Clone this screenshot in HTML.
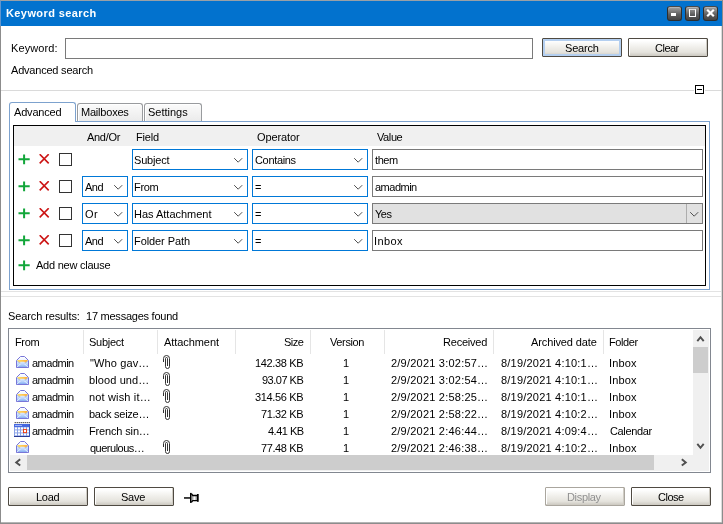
<!DOCTYPE html><html><head><meta charset="utf-8"><title>Keyword search</title><style>
*{box-sizing:border-box;margin:0;padding:0}
html,body{width:723px;height:524px;overflow:hidden;background:#fff}
body{position:relative;font:11px "Liberation Sans",sans-serif;color:#000}
#win{position:absolute;left:0;top:0;width:723px;height:524px;will-change:transform}
.a{position:absolute;white-space:nowrap}
.t{position:absolute;white-space:nowrap;line-height:13px;height:13px}
.btn{position:absolute;height:19px;border:1px solid #4f4a42;border-radius:1px;background:linear-gradient(#ffffff 0%,#ffffff 10%,#f1f0ec 45%,#e5e3dd 78%,#cbc8c0 100%);box-shadow:inset -1px -1px 0 #cfccc4,inset 1px 1px 0 #fff}
.sel{position:absolute;height:21px;border:1px solid #0078d7;background:#fff}
.inp{position:absolute;height:21px;border:1px solid #7a7a7a;background:#fff}
.chev{position:absolute;width:11px;height:7px}
.cb{position:absolute;width:13px;height:13px;border:1px solid #333;background:#fff}
.tab{position:absolute;border:1px solid #999b9e;border-bottom:none;border-radius:3px 3px 0 0;background:linear-gradient(#fbfbfb,#ebebeb);box-shadow:inset 1px 1px 0 #fff}
</style></head><body><div id="win">
<div class="a" style="left:0;top:0;width:723px;height:524px;border-left:1px solid #8c8c8c;border-right:1px solid #8c8c8c;border-bottom:1px solid #8c8c8c"></div>
<div class="a" style="left:721px;top:26px;width:1px;height:497px;background:#dcdcdc"></div>
<div class="a" style="left:1px;top:522px;width:721px;height:1px;background:#b4b4b4"></div>
<div class="a" style="left:0;top:0;width:722px;height:26px;background:#0272ce;border-top:1px solid #9aa0a6;border-left:1px solid #5f95cf"></div>
<div class="t" style="left:6px;top:7px;letter-spacing:0.40px;color:#fff;font-weight:bold">Keyword search</div>
<div class="a" style="left:667px;top:6px;width:15px;height:15px;border-radius:3px;background:linear-gradient(#a2a2a2 0%,#808080 30%,#5c5c5c 60%,#444 100%);border:1px solid #2e2e2e;border-top-color:#4a4a4a;box-shadow:inset 0 1px 0 #b4b4b4"></div>
<div class="a" style="left:685px;top:6px;width:15px;height:15px;border-radius:3px;background:linear-gradient(#a2a2a2 0%,#808080 30%,#5c5c5c 60%,#444 100%);border:1px solid #2e2e2e;border-top-color:#4a4a4a;box-shadow:inset 0 1px 0 #b4b4b4"></div>
<div class="a" style="left:703px;top:6px;width:15px;height:15px;border-radius:3px;background:linear-gradient(#a2a2a2 0%,#808080 30%,#5c5c5c 60%,#444 100%);border:1px solid #2e2e2e;border-top-color:#4a4a4a;box-shadow:inset 0 1px 0 #b4b4b4"></div>
<div class="a" style="left:671px;top:13px;width:5px;height:3px;background:#fff"></div>
<div class="a" style="left:689px;top:9px;width:7px;height:8px;border:1px solid #fff;border-top-color:#ddd"></div>
<svg class="a" style="left:706px;top:9px" width="9" height="8" viewBox="0 0 9 8"><path d="M1.2 0.8L7.8 7.2M7.8 0.8L1.2 7.2" stroke="#fff" stroke-width="2.2" fill="none"/></svg>
<div class="t" style="left:11px;top:42px;letter-spacing:0.09px;">Keyword:</div>
<div class="a" style="left:65px;top:38px;width:468px;height:21px;border:1px solid #7a7a7a;background:#fff"></div>
<div class="btn" style="left:542px;top:38px;width:80px;box-shadow:inset 0 0 0 2px #b4cff0"></div>
<div class="t" style="left:565px;top:42px;letter-spacing:-0.20px;">Search</div>
<div class="btn" style="left:628px;top:38px;width:80px;"></div>
<div class="t" style="left:655px;top:42px;letter-spacing:-0.50px;">Clear</div>
<div class="t" style="left:11px;top:64px;letter-spacing:-0.21px;">Advanced search</div>
<div class="a" style="left:1px;top:90px;width:720px;height:1px;background:#dadada"></div>
<div class="a" style="left:695px;top:85px;width:9px;height:9px;border:1px solid #000;background:#fff;box-shadow:0 0 0 1px #fff"></div>
<div class="a" style="left:697px;top:89px;width:5px;height:1px;background:#000"></div>
<div class="a" style="left:9px;top:121px;width:701px;height:169px;border:1px solid #7da2ce;background:#fff"></div>
<div class="tab" style="left:77px;top:103px;width:66px;height:18px"></div>
<div class="tab" style="left:144px;top:103px;width:58px;height:18px"></div>
<div class="tab" style="left:9px;top:102px;width:67px;height:20px;background:#fff;border-color:#7da2ce;box-shadow:none"></div>
<div class="t" style="left:14px;top:106px;letter-spacing:-0.19px;">Advanced</div>
<div class="t" style="left:81px;top:106px;letter-spacing:-0.21px;">Mailboxes</div>
<div class="t" style="left:148px;top:106px;letter-spacing:-0.01px;">Settings</div>
<div class="a" style="left:13px;top:125px;width:693px;height:161px;border:1px solid #000;background:#fff"></div>
<div class="a" style="left:14px;top:126px;width:691px;height:20px;background:#f0f0f0"></div>
<div class="t" style="left:87px;top:131px;letter-spacing:-0.30px;">And/Or</div>
<div class="t" style="left:136px;top:131px;letter-spacing:-0.20px;">Field</div>
<div class="t" style="left:257px;top:131px;letter-spacing:-0.10px;">Operator</div>
<div class="t" style="left:377px;top:131px;letter-spacing:-0.40px;">Value</div>
<svg class="a" style="left:18px;top:154px" width="12" height="11" viewBox="0 0 12 11"><path d="M6.1 0.4V10.2M0.5 5.3H11.7" stroke="#12a63a" stroke-width="2" fill="none"/></svg>
<svg class="a" style="left:39px;top:154px" width="11" height="10" viewBox="0 0 11 10"><path d="M0.7 0.2L9.7 9.4M9.7 0.2L0.7 9.4" stroke="#cc1414" stroke-width="1.6" fill="none"/></svg>
<div class="cb" style="left:59px;top:153px"></div>
<div class="sel" style="left:132px;top:149px;width:116px"></div>
<svg class="chev" style="left:234px;top:158px;margin:-1px 0 0 -1px" viewBox="0 0 11 7"><path d="M1.2 1.2 L5.2 5.2 L9.2 1.2" fill="none" stroke="#505050" stroke-width="1"/></svg>
<div class="t" style="left:134px;top:154px;letter-spacing:-0.20px;">Subject</div>
<div class="sel" style="left:252px;top:149px;width:116px"></div>
<svg class="chev" style="left:354px;top:158px;margin:-1px 0 0 -1px" viewBox="0 0 11 7"><path d="M1.2 1.2 L5.2 5.2 L9.2 1.2" fill="none" stroke="#505050" stroke-width="1"/></svg>
<div class="t" style="left:255px;top:154px;letter-spacing:-0.34px;">Contains</div>
<div class="inp" style="left:372px;top:149px;width:331px"></div>
<div class="t" style="left:375px;top:154px;letter-spacing:-0.43px;">them</div>
<svg class="a" style="left:18px;top:181px" width="12" height="11" viewBox="0 0 12 11"><path d="M6.1 0.4V10.2M0.5 5.3H11.7" stroke="#12a63a" stroke-width="2" fill="none"/></svg>
<svg class="a" style="left:39px;top:181px" width="11" height="10" viewBox="0 0 11 10"><path d="M0.7 0.2L9.7 9.4M9.7 0.2L0.7 9.4" stroke="#cc1414" stroke-width="1.6" fill="none"/></svg>
<div class="cb" style="left:59px;top:180px"></div>
<div class="sel" style="left:82px;top:176px;width:46px"></div>
<svg class="chev" style="left:114px;top:185px;margin:-1px 0 0 -1px" viewBox="0 0 11 7"><path d="M1.2 1.2 L5.2 5.2 L9.2 1.2" fill="none" stroke="#505050" stroke-width="1"/></svg>
<div class="t" style="left:85px;top:181px;letter-spacing:-0.50px;">And</div>
<div class="sel" style="left:132px;top:176px;width:116px"></div>
<svg class="chev" style="left:234px;top:185px;margin:-1px 0 0 -1px" viewBox="0 0 11 7"><path d="M1.2 1.2 L5.2 5.2 L9.2 1.2" fill="none" stroke="#505050" stroke-width="1"/></svg>
<div class="t" style="left:134px;top:181px;letter-spacing:-0.30px;">From</div>
<div class="sel" style="left:252px;top:176px;width:116px"></div>
<svg class="chev" style="left:354px;top:185px;margin:-1px 0 0 -1px" viewBox="0 0 11 7"><path d="M1.2 1.2 L5.2 5.2 L9.2 1.2" fill="none" stroke="#505050" stroke-width="1"/></svg>
<div class="t" style="left:255px;top:181px;letter-spacing:0.40px;">=</div>
<div class="inp" style="left:372px;top:176px;width:331px"></div>
<div class="t" style="left:375px;top:181px;letter-spacing:-0.50px;">amadmin</div>
<svg class="a" style="left:18px;top:208px" width="12" height="11" viewBox="0 0 12 11"><path d="M6.1 0.4V10.2M0.5 5.3H11.7" stroke="#12a63a" stroke-width="2" fill="none"/></svg>
<svg class="a" style="left:39px;top:208px" width="11" height="10" viewBox="0 0 11 10"><path d="M0.7 0.2L9.7 9.4M9.7 0.2L0.7 9.4" stroke="#cc1414" stroke-width="1.6" fill="none"/></svg>
<div class="cb" style="left:59px;top:207px"></div>
<div class="sel" style="left:82px;top:203px;width:46px"></div>
<svg class="chev" style="left:114px;top:212px;margin:-1px 0 0 -1px" viewBox="0 0 11 7"><path d="M1.2 1.2 L5.2 5.2 L9.2 1.2" fill="none" stroke="#505050" stroke-width="1"/></svg>
<div class="t" style="left:85px;top:208px;letter-spacing:0.40px;">Or</div>
<div class="sel" style="left:132px;top:203px;width:116px"></div>
<svg class="chev" style="left:234px;top:212px;margin:-1px 0 0 -1px" viewBox="0 0 11 7"><path d="M1.2 1.2 L5.2 5.2 L9.2 1.2" fill="none" stroke="#505050" stroke-width="1"/></svg>
<div class="t" style="left:134px;top:208px;letter-spacing:-0.01px;">Has Attachment</div>
<div class="sel" style="left:252px;top:203px;width:116px"></div>
<svg class="chev" style="left:354px;top:212px;margin:-1px 0 0 -1px" viewBox="0 0 11 7"><path d="M1.2 1.2 L5.2 5.2 L9.2 1.2" fill="none" stroke="#505050" stroke-width="1"/></svg>
<div class="t" style="left:255px;top:208px;letter-spacing:0.40px;">=</div>
<div class="inp" style="left:372px;top:203px;width:331px;background:#e1e1e1"></div>
<div class="a" style="left:686px;top:204px;width:1px;height:19px;background:#adadad"></div>
<svg class="chev" style="left:690px;top:212px;margin:-1px 0 0 -1px" viewBox="0 0 11 7"><path d="M1.2 1.2 L5.2 5.2 L9.2 1.2" fill="none" stroke="#505050" stroke-width="1"/></svg>
<div class="t" style="left:375px;top:208px;letter-spacing:-0.50px;">Yes</div>
<svg class="a" style="left:18px;top:235px" width="12" height="11" viewBox="0 0 12 11"><path d="M6.1 0.4V10.2M0.5 5.3H11.7" stroke="#12a63a" stroke-width="2" fill="none"/></svg>
<svg class="a" style="left:39px;top:235px" width="11" height="10" viewBox="0 0 11 10"><path d="M0.7 0.2L9.7 9.4M9.7 0.2L0.7 9.4" stroke="#cc1414" stroke-width="1.6" fill="none"/></svg>
<div class="cb" style="left:59px;top:234px"></div>
<div class="sel" style="left:82px;top:230px;width:46px"></div>
<svg class="chev" style="left:114px;top:239px;margin:-1px 0 0 -1px" viewBox="0 0 11 7"><path d="M1.2 1.2 L5.2 5.2 L9.2 1.2" fill="none" stroke="#505050" stroke-width="1"/></svg>
<div class="t" style="left:85px;top:235px;letter-spacing:-0.50px;">And</div>
<div class="sel" style="left:132px;top:230px;width:116px"></div>
<svg class="chev" style="left:234px;top:239px;margin:-1px 0 0 -1px" viewBox="0 0 11 7"><path d="M1.2 1.2 L5.2 5.2 L9.2 1.2" fill="none" stroke="#505050" stroke-width="1"/></svg>
<div class="t" style="left:134px;top:235px;letter-spacing:-0.08px;">Folder Path</div>
<div class="sel" style="left:252px;top:230px;width:116px"></div>
<svg class="chev" style="left:354px;top:239px;margin:-1px 0 0 -1px" viewBox="0 0 11 7"><path d="M1.2 1.2 L5.2 5.2 L9.2 1.2" fill="none" stroke="#505050" stroke-width="1"/></svg>
<div class="t" style="left:255px;top:235px;letter-spacing:0.40px;">=</div>
<div class="inp" style="left:372px;top:230px;width:331px"></div>
<div class="t" style="left:374px;top:235px;letter-spacing:0.40px;">Inbox</div>
<svg class="a" style="left:18px;top:260px" width="12" height="11" viewBox="0 0 12 11"><path d="M6.1 0.4V10.2M0.5 5.3H11.7" stroke="#12a63a" stroke-width="2" fill="none"/></svg>
<div class="t" style="left:36px;top:259px;letter-spacing:-0.24px;">Add new clause</div>
<div class="a" style="left:1px;top:291px;width:720px;height:1px;background:#e3e3e3"></div>
<div class="a" style="left:1px;top:296px;width:720px;height:1px;background:#e3e3e3"></div>
<div class="t" style="left:8px;top:310px;letter-spacing:-0.11px;">Search results:</div>
<div class="t" style="left:86px;top:310px;letter-spacing:-0.24px;">17 messages found</div>
<div class="a" style="left:8px;top:328px;width:703px;height:145px;border:1px solid #828790;background:#fff"></div>
<div class="a" style="left:83px;top:330px;width:1px;height:24px;background:#e5e5e5"></div>
<div class="a" style="left:157px;top:330px;width:1px;height:24px;background:#e5e5e5"></div>
<div class="a" style="left:235px;top:330px;width:1px;height:24px;background:#e5e5e5"></div>
<div class="a" style="left:310px;top:330px;width:1px;height:24px;background:#e5e5e5"></div>
<div class="a" style="left:384px;top:330px;width:1px;height:24px;background:#e5e5e5"></div>
<div class="a" style="left:493px;top:330px;width:1px;height:24px;background:#e5e5e5"></div>
<div class="a" style="left:603px;top:330px;width:1px;height:24px;background:#e5e5e5"></div>
<div class="t" style="left:15px;top:336px;letter-spacing:-0.37px;">From</div>
<div class="t" style="left:89px;top:336px;letter-spacing:-0.27px;">Subject</div>
<div class="t" style="left:164px;top:336px;letter-spacing:-0.07px;">Attachment</div>
<div class="t" style="left:284px;top:336px;letter-spacing:-0.50px;">Size</div>
<div class="t" style="left:330px;top:336px;letter-spacing:-0.37px;">Version</div>
<div class="t" style="left:443px;top:336px;letter-spacing:-0.21px;">Received</div>
<div class="t" style="left:531px;top:336px;letter-spacing:-0.12px;">Archived date</div>
<div class="t" style="left:609px;top:336px;letter-spacing:-0.42px;">Folder</div>
<svg class="a" style="left:16px;top:356px" width="13" height="12" viewBox="0 0 13 12"><defs><linearGradient id="mg" x1="0" y1="0" x2="0" y2="1"><stop offset="0" stop-color="#ffffff"/><stop offset="0.4" stop-color="#eaf2ff"/><stop offset="0.75" stop-color="#b4d0fa"/><stop offset="1" stop-color="#7aa4f0"/></linearGradient><linearGradient id="yg" x1="0" y1="0" x2="1" y2="0"><stop offset="0" stop-color="#ffe36a"/><stop offset="1" stop-color="#ffab3a"/></linearGradient></defs><path d="M4.5 0.5 H8.5 L12.5 4.5 V11.5 H0.5 V4.5 Z" fill="url(#mg)" stroke="#7876d8" stroke-width="1"/><path d="M1 4 H12 L10.2 6.6 H8.6 V5.8 H4.4 V6.6 H2.8 Z" fill="url(#yg)"/><path d="M1 11 L5 7.5 M12 11 L8 7.5" stroke="#ffffff" stroke-width="0.9" opacity="0.8" fill="none"/><path d="M1 5 L4.5 7.6 M12 5 L8.5 7.6" stroke="#8aa6ea" stroke-width="0.6" fill="none"/></svg>
<div class="t" style="left:32px;top:357px;letter-spacing:-0.50px;">amadmin</div>
<div class="t" style="left:90px;top:357px;letter-spacing:0.12px;">"Who gav…</div>
<svg class="a" style="left:163px;top:355px" width="7" height="14" viewBox="0 0 7 14"><path d="M0.5 7 V3.5 A3 3 0 0 1 6.5 3.5 V11.5 A2 2 0 0 1 2.5 11.5 V3.5 A1 1 0 0 1 4.5 3.5 V11" fill="none" stroke="#333" stroke-width="1"/></svg>
<div class="t" style="left:255px;top:357px;letter-spacing:-0.34px;">142.38 KB</div>
<div class="t" style="left:343px;top:357px;letter-spacing:-0.50px;">1</div>
<div class="t" style="left:391px;top:357px;letter-spacing:0.22px;">2/9/2021 3:02:57…</div>
<div class="t" style="left:501px;top:357px;letter-spacing:0.21px;">8/19/2021 4:10:1…</div>
<div class="t" style="left:609px;top:357px;letter-spacing:0.12px;">Inbox</div>
<svg class="a" style="left:16px;top:373px" width="13" height="12" viewBox="0 0 13 12"><defs><linearGradient id="mg" x1="0" y1="0" x2="0" y2="1"><stop offset="0" stop-color="#ffffff"/><stop offset="0.4" stop-color="#eaf2ff"/><stop offset="0.75" stop-color="#b4d0fa"/><stop offset="1" stop-color="#7aa4f0"/></linearGradient><linearGradient id="yg" x1="0" y1="0" x2="1" y2="0"><stop offset="0" stop-color="#ffe36a"/><stop offset="1" stop-color="#ffab3a"/></linearGradient></defs><path d="M4.5 0.5 H8.5 L12.5 4.5 V11.5 H0.5 V4.5 Z" fill="url(#mg)" stroke="#7876d8" stroke-width="1"/><path d="M1 4 H12 L10.2 6.6 H8.6 V5.8 H4.4 V6.6 H2.8 Z" fill="url(#yg)"/><path d="M1 11 L5 7.5 M12 11 L8 7.5" stroke="#ffffff" stroke-width="0.9" opacity="0.8" fill="none"/><path d="M1 5 L4.5 7.6 M12 5 L8.5 7.6" stroke="#8aa6ea" stroke-width="0.6" fill="none"/></svg>
<div class="t" style="left:32px;top:374px;letter-spacing:-0.50px;">amadmin</div>
<div class="t" style="left:89px;top:374px;letter-spacing:0.11px;">blood und…</div>
<svg class="a" style="left:163px;top:372px" width="7" height="14" viewBox="0 0 7 14"><path d="M0.5 7 V3.5 A3 3 0 0 1 6.5 3.5 V11.5 A2 2 0 0 1 2.5 11.5 V3.5 A1 1 0 0 1 4.5 3.5 V11" fill="none" stroke="#333" stroke-width="1"/></svg>
<div class="t" style="left:262px;top:374px;letter-spacing:-0.50px;">93.07 KB</div>
<div class="t" style="left:343px;top:374px;letter-spacing:-0.50px;">1</div>
<div class="t" style="left:391px;top:374px;letter-spacing:0.22px;">2/9/2021 3:02:54…</div>
<div class="t" style="left:501px;top:374px;letter-spacing:0.21px;">8/19/2021 4:10:1…</div>
<div class="t" style="left:609px;top:374px;letter-spacing:0.12px;">Inbox</div>
<svg class="a" style="left:16px;top:390px" width="13" height="12" viewBox="0 0 13 12"><defs><linearGradient id="mg" x1="0" y1="0" x2="0" y2="1"><stop offset="0" stop-color="#ffffff"/><stop offset="0.4" stop-color="#eaf2ff"/><stop offset="0.75" stop-color="#b4d0fa"/><stop offset="1" stop-color="#7aa4f0"/></linearGradient><linearGradient id="yg" x1="0" y1="0" x2="1" y2="0"><stop offset="0" stop-color="#ffe36a"/><stop offset="1" stop-color="#ffab3a"/></linearGradient></defs><path d="M4.5 0.5 H8.5 L12.5 4.5 V11.5 H0.5 V4.5 Z" fill="url(#mg)" stroke="#7876d8" stroke-width="1"/><path d="M1 4 H12 L10.2 6.6 H8.6 V5.8 H4.4 V6.6 H2.8 Z" fill="url(#yg)"/><path d="M1 11 L5 7.5 M12 11 L8 7.5" stroke="#ffffff" stroke-width="0.9" opacity="0.8" fill="none"/><path d="M1 5 L4.5 7.6 M12 5 L8.5 7.6" stroke="#8aa6ea" stroke-width="0.6" fill="none"/></svg>
<div class="t" style="left:32px;top:391px;letter-spacing:-0.50px;">amadmin</div>
<div class="t" style="left:89px;top:391px;letter-spacing:0.16px;">not wish it…</div>
<svg class="a" style="left:163px;top:389px" width="7" height="14" viewBox="0 0 7 14"><path d="M0.5 7 V3.5 A3 3 0 0 1 6.5 3.5 V11.5 A2 2 0 0 1 2.5 11.5 V3.5 A1 1 0 0 1 4.5 3.5 V11" fill="none" stroke="#333" stroke-width="1"/></svg>
<div class="t" style="left:255px;top:391px;letter-spacing:-0.34px;">314.56 KB</div>
<div class="t" style="left:343px;top:391px;letter-spacing:-0.50px;">1</div>
<div class="t" style="left:391px;top:391px;letter-spacing:0.22px;">2/9/2021 2:58:25…</div>
<div class="t" style="left:501px;top:391px;letter-spacing:0.21px;">8/19/2021 4:10:1…</div>
<div class="t" style="left:609px;top:391px;letter-spacing:0.12px;">Inbox</div>
<svg class="a" style="left:16px;top:407px" width="13" height="12" viewBox="0 0 13 12"><defs><linearGradient id="mg" x1="0" y1="0" x2="0" y2="1"><stop offset="0" stop-color="#ffffff"/><stop offset="0.4" stop-color="#eaf2ff"/><stop offset="0.75" stop-color="#b4d0fa"/><stop offset="1" stop-color="#7aa4f0"/></linearGradient><linearGradient id="yg" x1="0" y1="0" x2="1" y2="0"><stop offset="0" stop-color="#ffe36a"/><stop offset="1" stop-color="#ffab3a"/></linearGradient></defs><path d="M4.5 0.5 H8.5 L12.5 4.5 V11.5 H0.5 V4.5 Z" fill="url(#mg)" stroke="#7876d8" stroke-width="1"/><path d="M1 4 H12 L10.2 6.6 H8.6 V5.8 H4.4 V6.6 H2.8 Z" fill="url(#yg)"/><path d="M1 11 L5 7.5 M12 11 L8 7.5" stroke="#ffffff" stroke-width="0.9" opacity="0.8" fill="none"/><path d="M1 5 L4.5 7.6 M12 5 L8.5 7.6" stroke="#8aa6ea" stroke-width="0.6" fill="none"/></svg>
<div class="t" style="left:32px;top:408px;letter-spacing:-0.50px;">amadmin</div>
<div class="t" style="left:89px;top:408px;letter-spacing:-0.25px;">back seize…</div>
<svg class="a" style="left:163px;top:406px" width="7" height="14" viewBox="0 0 7 14"><path d="M0.5 7 V3.5 A3 3 0 0 1 6.5 3.5 V11.5 A2 2 0 0 1 2.5 11.5 V3.5 A1 1 0 0 1 4.5 3.5 V11" fill="none" stroke="#333" stroke-width="1"/></svg>
<div class="t" style="left:261px;top:408px;letter-spacing:-0.39px;">71.32 KB</div>
<div class="t" style="left:343px;top:408px;letter-spacing:-0.50px;">1</div>
<div class="t" style="left:391px;top:408px;letter-spacing:0.22px;">2/9/2021 2:58:22…</div>
<div class="t" style="left:501px;top:408px;letter-spacing:0.21px;">8/19/2021 4:10:2…</div>
<div class="t" style="left:609px;top:408px;letter-spacing:0.12px;">Inbox</div>
<svg class="a" style="left:14px;top:422px" width="16" height="15" viewBox="0 0 16 15"><rect x="0" y="0" width="16" height="2" fill="#fff"/><rect x="0.7" y="0" width="1" height="1.2" fill="#222"/><rect x="2.7" y="0" width="1" height="1.2" fill="#222"/><rect x="4.7" y="0" width="1" height="1.2" fill="#222"/><rect x="6.7" y="0" width="1" height="1.2" fill="#222"/><rect x="8.7" y="0" width="1" height="1.2" fill="#222"/><rect x="10.7" y="0" width="1" height="1.2" fill="#222"/><rect x="12.7" y="0" width="1" height="1.2" fill="#222"/><rect x="14.7" y="0" width="1" height="1.2" fill="#222"/><rect x="0" y="2" width="16" height="3" fill="#4668e0"/><rect x="1" y="3" width="7" height="1" fill="#9fb4f4"/><rect x="0" y="5" width="16" height="10" fill="#8aa2e6"/><rect x="1" y="5.4" width="2" height="2" fill="#fff"/><rect x="4" y="5.4" width="2" height="2" fill="#fff"/><rect x="7" y="5.4" width="2" height="2" fill="#fff"/><rect x="10" y="5.4" width="2" height="2" fill="#fff"/><rect x="13" y="5.4" width="2" height="2" fill="#fff"/><rect x="1" y="8.4" width="2" height="2" fill="#fff"/><rect x="4" y="8.4" width="2" height="2" fill="#fff"/><rect x="7" y="8.4" width="2" height="2" fill="#fff"/><rect x="10" y="8.4" width="2" height="2" fill="#fff"/><rect x="13" y="8.4" width="2" height="2" fill="#fff"/><rect x="1" y="11.4" width="2" height="2" fill="#fff"/><rect x="4" y="11.4" width="2" height="2" fill="#fff"/><rect x="7" y="11.4" width="2" height="2" fill="#fff"/><rect x="10" y="11.4" width="2" height="2" fill="#fff"/><rect x="13" y="11.4" width="2" height="2" fill="#fff"/><rect x="9.5" y="7.4" width="3" height="3.2" fill="#fff" stroke="#f03400" stroke-width="0.9"/><rect x="0" y="14" width="16" height="1" fill="#2a3a92"/><rect x="15" y="2" width="1" height="13" fill="#3a55b8"/></svg>
<div class="t" style="left:32px;top:425px;letter-spacing:-0.50px;">amadmin</div>
<div class="t" style="left:89px;top:425px;letter-spacing:-0.15px;">French sin…</div>
<div class="t" style="left:268px;top:425px;letter-spacing:-0.50px;">4.41 KB</div>
<div class="t" style="left:343px;top:425px;letter-spacing:-0.50px;">1</div>
<div class="t" style="left:391px;top:425px;letter-spacing:0.22px;">2/9/2021 2:46:44…</div>
<div class="t" style="left:501px;top:425px;letter-spacing:0.21px;">8/19/2021 4:09:4…</div>
<div class="t" style="left:610px;top:425px;letter-spacing:-0.37px;">Calendar</div>
<svg class="a" style="left:16px;top:441px" width="13" height="12" viewBox="0 0 13 12"><defs><linearGradient id="mg" x1="0" y1="0" x2="0" y2="1"><stop offset="0" stop-color="#ffffff"/><stop offset="0.4" stop-color="#eaf2ff"/><stop offset="0.75" stop-color="#b4d0fa"/><stop offset="1" stop-color="#7aa4f0"/></linearGradient><linearGradient id="yg" x1="0" y1="0" x2="1" y2="0"><stop offset="0" stop-color="#ffe36a"/><stop offset="1" stop-color="#ffab3a"/></linearGradient></defs><path d="M4.5 0.5 H8.5 L12.5 4.5 V11.5 H0.5 V4.5 Z" fill="url(#mg)" stroke="#7876d8" stroke-width="1"/><path d="M1 4 H12 L10.2 6.6 H8.6 V5.8 H4.4 V6.6 H2.8 Z" fill="url(#yg)"/><path d="M1 11 L5 7.5 M12 11 L8 7.5" stroke="#ffffff" stroke-width="0.9" opacity="0.8" fill="none"/><path d="M1 5 L4.5 7.6 M12 5 L8.5 7.6" stroke="#8aa6ea" stroke-width="0.6" fill="none"/></svg>
<div class="t" style="left:90px;top:442px;letter-spacing:-0.50px;">querulous…</div>
<svg class="a" style="left:163px;top:440px" width="7" height="14" viewBox="0 0 7 14"><path d="M0.5 7 V3.5 A3 3 0 0 1 6.5 3.5 V11.5 A2 2 0 0 1 2.5 11.5 V3.5 A1 1 0 0 1 4.5 3.5 V11" fill="none" stroke="#333" stroke-width="1"/></svg>
<div class="t" style="left:261px;top:442px;letter-spacing:-0.39px;">77.48 KB</div>
<div class="t" style="left:343px;top:442px;letter-spacing:-0.50px;">1</div>
<div class="t" style="left:391px;top:442px;letter-spacing:0.22px;">2/9/2021 2:46:38…</div>
<div class="t" style="left:501px;top:442px;letter-spacing:0.21px;">8/19/2021 4:10:2…</div>
<div class="t" style="left:609px;top:442px;letter-spacing:0.12px;">Inbox</div>
<div class="a" style="left:693px;top:330px;width:16px;height:141px;background:#f0f0f0"></div>
<div class="a" style="left:10px;top:455px;width:699px;height:16px;background:#f0f0f0"></div>
<div class="a" style="left:693px;top:347px;width:15px;height:26px;background:#cdcdcd"></div>
<div class="a" style="left:27px;top:455px;width:627px;height:15px;background:#cdcdcd"></div>
<svg class="a" style="left:696px;top:335px" width="9" height="8" viewBox="0 0 9 8"><path d="M1.3 6.2L4.5 2.2L7.7 6.2" fill="none" stroke="#505050" stroke-width="1.9"/></svg>
<svg class="a" style="left:696px;top:442px" width="9" height="8" viewBox="0 0 9 8"><path d="M1.3 1.8L4.5 5.8L7.7 1.8" fill="none" stroke="#505050" stroke-width="1.9"/></svg>
<svg class="a" style="left:14px;top:458px" width="8" height="9" viewBox="0 0 8 9"><path d="M6.2 1.2L2.2 4.4L6.2 7.6" fill="none" stroke="#505050" stroke-width="1.9"/></svg>
<svg class="a" style="left:680px;top:458px" width="8" height="9" viewBox="0 0 8 9"><path d="M1.8 1.2L5.8 4.4L1.8 7.6" fill="none" stroke="#505050" stroke-width="1.9"/></svg>
<div class="btn" style="left:8px;top:487px;width:80px;"></div>
<div class="t" style="left:36px;top:491px;letter-spacing:-0.30px;">Load</div>
<div class="btn" style="left:94px;top:487px;width:80px;"></div>
<div class="t" style="left:121px;top:491px;letter-spacing:-0.27px;">Save</div>
<svg class="a" style="left:184px;top:492px" width="16" height="12" viewBox="0 0 16 12"><defs><linearGradient id="pg" x1="0" y1="0" x2="1" y2="0"><stop offset="0" stop-color="#777"/><stop offset="0.5" stop-color="#ffffff"/><stop offset="1" stop-color="#777"/></linearGradient></defs><rect x="0" y="5.1" width="6.5" height="1.7" fill="#222"/><rect x="6" y="0.9" width="1.6" height="10" fill="#000"/><rect x="7.4" y="3" width="6" height="6" fill="url(#pg)"/><path d="M7.4 1.6 L8.8 3.5 H13 M7.4 10.2 L8.8 8.6 H13" stroke="#000" stroke-width="1.3" fill="none"/><rect x="13" y="2" width="1.7" height="7.8" fill="#000"/></svg>
<div class="btn" style="left:545px;top:487px;width:80px;border-color:#aaa69e"></div>
<div class="t" style="left:567px;top:491px;letter-spacing:-0.33px;color:#909090">Display</div>
<div class="btn" style="left:631px;top:487px;width:80px;"></div>
<div class="t" style="left:658px;top:491px;letter-spacing:-0.50px;">Close</div>
</div></body></html>
